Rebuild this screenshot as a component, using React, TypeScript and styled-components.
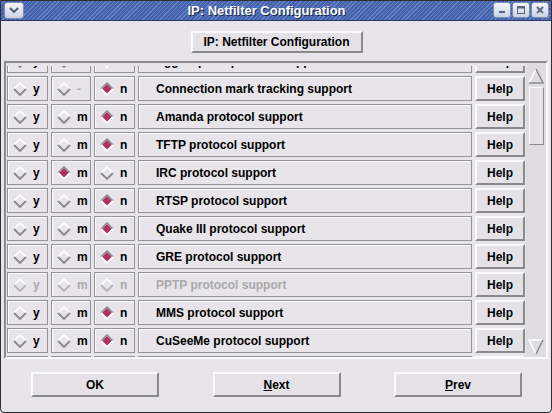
import React from "react";
import styled, { createGlobalStyle } from "styled-components";

const Global = createGlobalStyle`
  html, body { margin: 0; padding: 0; background: #e6e4e8; }
  body { font-family: "Liberation Sans", Arial, sans-serif; }
`;

const Window = styled.div`
  width: 552px;
  height: 413px;
  box-sizing: border-box;
  border: 1px solid #2e2e2e;
  border-radius: 0 0 4px 4px;
  background: #e7e5e9;
  display: flex;
  flex-direction: column;
  overflow: hidden;
`;

const TitleBar = styled.div`
  height: 20px;
  flex: none;
  box-sizing: border-box;
  display: flex;
  align-items: center;
  padding: 0 2px 1px 3px;
  background: repeating-linear-gradient(135deg, #4563ab 0 2px, #6481c3 2px 3px);
  border-bottom: 1px solid #2a3a68;
`;

const Title = styled.div`
  flex: 1;
  text-align: center;
  padding-left: 16px;
  color: #fff;
  font-weight: bold;
  font-size: 13px;
  text-shadow: 1px 1px 0 #1b2850;
  white-space: nowrap;
`;

const TitleButtons = styled.div`
  display: flex;
  gap: 1px;
`;

const TitleButton = styled.div<{ $wide?: boolean }>`
  width: ${(p) => (p.$wide ? 20 : 18)}px;
  height: ${(p) => (p.$wide ? 17 : 16)}px;
  box-sizing: border-box;
  border: 1px solid #7c8bb3;
  border-radius: 3px;
  background: linear-gradient(#f3f5f9, #cbd2e1);
  display: flex;
  align-items: center;
  justify-content: center;
`;

const Body = styled.div`
  flex: 1;
  display: flex;
  flex-direction: column;
  padding-top: 10px;
`;

const Raised = styled.div`
  box-sizing: border-box;
  border: 2px solid;
  border-color: #fbfbfb #8a8a8a #8a8a8a #fbfbfb;
  background: #e4e2e7;
  color: #000;
  font-weight: bold;
  font-size: 12px;
  display: flex;
  align-items: center;
  justify-content: center;
  white-space: nowrap;
`;

const HeaderButton = styled(Raised)`
  align-self: center;
  height: 22px;
  width: 172px;
  margin-left: 1px;
`;

const ListFrame = styled.div`
  margin: 8px 3px 0 3px;
  height: 298px;
  box-sizing: border-box;
  border: 2px solid;
  border-color: #8b8b8b #fbfbfb #fbfbfb #8b8b8b;
  display: flex;
`;

const Viewport = styled.div`
  flex: 1;
  overflow: hidden;
  margin-top: 3px;
  padding-left: 1px;
`;

const Rows = styled.div`
  display: flex;
  flex-direction: column;
  gap: 3px;
  margin-top: -18px;
`;

const Row = styled.div`
  display: grid;
  grid-template-columns: 41px 40px 41px 334px 50px;
  column-gap: 3px;
  height: 25px;
  flex: none;
`;

const Cell = styled.div<{ $disabled?: boolean }>`
  box-sizing: border-box;
  border: 1px solid #939393;
  box-shadow: inset 1px 1px 0 #fdfdfd;
  display: flex;
  align-items: center;
  gap: 6px;
  padding-left: 5px;
  font-weight: bold;
  font-size: 12px;
  color: ${(p) => (p.$disabled ? "#a9a9a9" : "#000")};
`;

const Label = styled(Cell)`
  padding-left: 17px;
  white-space: nowrap;
  overflow: hidden;
`;

const Letter = styled.span<{ $dim?: boolean }>`
  color: ${(p) => (p.$dim ? "#a9a9a9" : "inherit")};
`;

const HelpButton = styled(Raised)`
  height: 25px;
`;

const Scrollbar = styled.div`
  width: 20px;
  flex: none;
  display: flex;
  flex-direction: column;
  align-items: center;
  background: #dedce1;
  padding: 5px 0 2px 0;
  box-sizing: border-box;
`;

const Slider = styled.div`
  width: 15px;
  height: 58px;
  margin-top: 3px;
  box-sizing: border-box;
  border: 1px solid;
  border-color: #fbfbfb #8a8a8a #8a8a8a #fbfbfb;
  background: #e4e2e7;
`;

const Spacer = styled.div`
  flex: 1;
`;

const ButtonRow = styled.div`
  margin-top: 13px;
  display: flex;
  justify-content: space-between;
  padding: 0 29px 0 30px;
`;

const BottomButton = styled(Raised)`
  width: 128px;
  height: 25px;
`;

function Diamond({ selected, disabled }: { selected?: boolean; disabled?: boolean }) {
  const dark = disabled ? "#b5b5b5" : "#8a8a8a";
  return (
    <svg width="14" height="14" viewBox="0 0 14 14">
      {selected && <polygon points="7,2 12,7 7,12 2,7" fill="#b03060" />}
      <path d="M1,7 L7,1 L13,7" fill="none" stroke={selected ? dark : "#ffffff"} strokeWidth="1.6" />
      <path d="M1,7 L7,13 L13,7" fill="none" stroke={selected ? "#ffffff" : dark} strokeWidth="1.8" />
    </svg>
  );
}

function ArrowUp() {
  return (
    <svg width="16" height="16" viewBox="0 0 16 16">
      <path d="M1,15 L8,1" stroke="#ffffff" strokeWidth="1.5" fill="none" />
      <path d="M8,1 L15,15 L1,15" stroke="#8a8a8a" strokeWidth="1.5" fill="none" />
    </svg>
  );
}

function ArrowDown() {
  return (
    <svg width="16" height="16" viewBox="0 0 16 16">
      <path d="M15,1 L1,1 L8,15" stroke="#ffffff" strokeWidth="1.5" fill="none" />
      <path d="M8,15 L15,1" stroke="#8a8a8a" strokeWidth="1.5" fill="none" />
    </svg>
  );
}

type Item = { label: string; sel: "y" | "m" | "n" | null; noM?: boolean; disabled?: boolean };

const items: Item[] = [
  { label: "Eggdrop bot protocol support", sel: "n" },
  { label: "Connection mark tracking support", sel: "n", noM: true },
  { label: "Amanda protocol support", sel: "n" },
  { label: "TFTP protocol support", sel: "n" },
  { label: "IRC protocol support", sel: "m" },
  { label: "RTSP protocol support", sel: "n" },
  { label: "Quake III protocol support", sel: "n" },
  { label: "GRE protocol support", sel: "n" },
  { label: "PPTP protocol support", sel: null, disabled: true },
  { label: "MMS protocol support", sel: "n" },
  { label: "CuSeeMe protocol support", sel: "n" },
  { label: "H.323 protocol support", sel: "n" },
];

export default function App() {
  return (
    <>
      <Global />
      <Window>
        <TitleBar>
          <TitleButton $wide>
            <svg width="12" height="8" viewBox="0 0 12 8">
              <path d="M2,2 L6,6 L10,2" stroke="#4a5578" strokeWidth="1.8" fill="none" />
            </svg>
          </TitleButton>
          <Title>IP: Netfilter Configuration</Title>
          <TitleButtons>
            <TitleButton>
              <svg width="10" height="10" viewBox="0 0 10 10">
                <rect x="2" y="6" width="6" height="2" fill="#5a6380" />
              </svg>
            </TitleButton>
            <TitleButton>
              <svg width="10" height="10" viewBox="0 0 10 10">
                <rect x="1.5" y="1.5" width="7" height="7" fill="none" stroke="#5a6380" strokeWidth="1" />
                <rect x="1.5" y="1.5" width="7" height="2" fill="#5a6380" />
              </svg>
            </TitleButton>
            <TitleButton>
              <svg width="10" height="10" viewBox="0 0 10 10">
                <path d="M2,2 L8,8 M8,2 L2,8" stroke="#5a6380" strokeWidth="1.8" />
              </svg>
            </TitleButton>
          </TitleButtons>
        </TitleBar>
        <Body>
          <HeaderButton>IP: Netfilter Configuration</HeaderButton>
          <ListFrame>
            <Viewport>
              <Rows>
                {items.map((it, i) => (
                  <Row key={i}>
                    <Cell $disabled={it.disabled}>
                      <Diamond selected={it.sel === "y"} disabled={it.disabled} />
                      <Letter>y</Letter>
                    </Cell>
                    <Cell $disabled={it.disabled}>
                      <Diamond selected={it.sel === "m"} disabled={it.disabled} />
                      <Letter $dim={it.noM}>{it.noM ? "-" : "m"}</Letter>
                    </Cell>
                    <Cell $disabled={it.disabled}>
                      <Diamond selected={it.sel === "n"} disabled={it.disabled} />
                      <Letter>n</Letter>
                    </Cell>
                    <Label $disabled={it.disabled}>{it.label}</Label>
                    <HelpButton>Help</HelpButton>
                  </Row>
                ))}
              </Rows>
            </Viewport>
            <Scrollbar>
              <ArrowUp />
              <Slider />
              <Spacer />
              <ArrowDown />
            </Scrollbar>
          </ListFrame>
          <ButtonRow>
            <BottomButton>OK</BottomButton>
            <BottomButton>
              <span>
                <u>N</u>ext
              </span>
            </BottomButton>
            <BottomButton>
              <span>
                <u>P</u>rev
              </span>
            </BottomButton>
          </ButtonRow>
        </Body>
      </Window>
    </>
  );
}
